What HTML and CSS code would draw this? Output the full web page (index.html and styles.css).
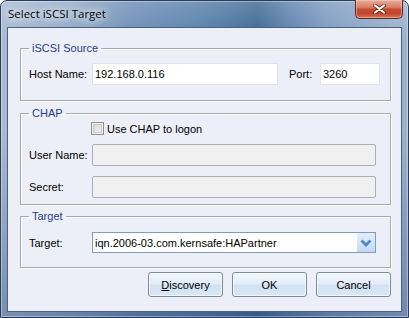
FILE: index.html
```html
<!DOCTYPE html>
<html>
<head>
<meta charset="utf-8">
<title>Select iSCSI Target</title>
<link rel="stylesheet" href="styles.css">
</head>
<body>
<div class="window">
  <div class="titlebar">
    <span class="title">Select iSCSI Target</span>
    <div class="close" aria-label="Close">
      <svg width="13" height="10" viewBox="0 0 13 10">
        <path d="M2 1.5 L11 8.5 M11 1.5 L2 8.5" stroke="#4a1a10" stroke-width="4" stroke-linecap="round" fill="none" opacity="0.7"/>
        <path d="M2 1.5 L11 8.5 M11 1.5 L2 8.5" stroke="#ffffff" stroke-width="2.2" stroke-linecap="round" fill="none"/>
      </svg>
    </div>
  </div>
  <div class="client">
    <fieldset class="group g-source">
      <legend>iSCSI Source</legend>
      <div class="row">
        <span class="lbl">Host Name:</span>
        <div class="field host">192.168.0.116</div>
        <span class="lbl port-lbl">Port:</span>
        <div class="field port">3260</div>
      </div>
    </fieldset>
    <fieldset class="group g-chap">
      <legend>CHAP</legend>
      <div class="check-row">
        <span class="checkbox"></span>
        <span class="check-label">Use CHAP to logon</span>
      </div>
      <div class="row row-user">
        <span class="lbl">User Name:</span>
        <div class="field disabled wide"></div>
      </div>
      <div class="row row-secret">
        <span class="lbl">Secret:</span>
        <div class="field disabled wide"></div>
      </div>
    </fieldset>
    <fieldset class="group g-target">
      <legend>Target</legend>
      <div class="row">
        <span class="lbl">Target:</span>
        <div class="combo">
          <span class="combo-text">iqn.2006-03.com.kernsafe:HAPartner</span>
          <span class="combo-btn">
            <svg width="12" height="8" viewBox="0 0 12 8">
              <path d="M1.5 1.5 L6 6 L10.5 1.5" stroke="#4f86cc" stroke-width="2.8" fill="none" stroke-linejoin="miter"/>
            </svg>
          </span>
        </div>
      </div>
    </fieldset>
    <div class="buttons">
      <div class="btn"><span class="ul">D</span>iscovery</div>
      <div class="btn">OK</div>
      <div class="btn">Cancel</div>
    </div>
  </div>
</div>
</body>
</html>
```

FILE: styles.css
```css
html, body {
  margin: 0;
  padding: 0;
}
body {
  width: 409px;
  height: 318px;
  overflow: hidden;
  background: #ffffff;
  font-family: "Liberation Sans", Arial, sans-serif;
  font-size: 11px;
  color: #000;
}
.window {
  box-sizing: border-box;
  width: 409px;
  height: 318px;
  border: 1px solid #2b3e58;
  border-radius: 7px 7px 0 0;
  display: flex;
  flex-direction: column;
  background:
    linear-gradient(180deg, rgba(255,255,255,0.18) 0%, rgba(255,255,255,0) 12%, rgba(30,60,110,0.0) 40%, rgba(30,60,110,0.35) 100%),
    linear-gradient(90deg, #a9bcd3 0%, #90a9c8 18%, #6d8eb6 32%, #5880ab 48%, #4a729f 57%, #3f6894 63%, #5b80ab 70%, #7d9bbf 80%, #8ea8c8 90%, #9db4cf 100%);
  box-shadow: inset 0 0 0 1px rgba(255,255,255,0.35);
}
.titlebar {
  height: 26px;
  display: flex;
  align-items: flex-start;
  padding-left: 7px;
  flex: none;
}
.title {
  font-family: "Open Sans", "Noto Sans", sans-serif;
  font-size: 11.5px;
  line-height: 16px;
  margin-top: 5px;
  color: #000;
  text-shadow: 0 0 6px rgba(255,255,255,0.95), 0 0 10px rgba(255,255,255,0.8), 0 0 14px rgba(255,255,255,0.6);
}
.close {
  margin-left: auto;
  margin-right: 5px;
  margin-top: -1px;
  width: 48px;
  height: 19px;
  box-sizing: border-box;
  border: 1px solid #5a2a22;
  border-top: none;
  border-radius: 0 0 5px 5px;
  background: linear-gradient(180deg, #e9ab98 0%, #d98068 40%, #c54a31 52%, #c2462e 75%, #d7745a 100%);
  box-shadow: inset 0 0 0 1px rgba(255,220,210,0.45);
  display: flex;
  align-items: center;
  justify-content: center;
}
.client {
  flex: 1;
  margin: 0 6px 5px 6px;
  border: 1px solid #48627f;
  background: #eceff7;
  padding: 14px 10px 0 12px;
  box-sizing: border-box;
  display: flex;
  flex-direction: column;
}
.group {
  margin: 0;
  padding: 0;
  min-width: 0;
  border: 1px solid #a7a9ad;
  box-shadow: 1px 1px 0 #ffffff, inset 1px 1px 0 #ffffff;
}
.group legend {
  margin-left: 8px;
  padding: 0 3px;
  font-size: 11px;
  line-height: 13px;
  color: #1f3a8f;
}
.g-source {
  padding-top: 8px;
  padding-bottom: 15px;
}
.g-chap {
  margin-top: 6px;
  padding-top: 2px;
  padding-bottom: 6px;
}
.g-target {
  margin-top: 5px;
  padding-top: 9px;
  padding-bottom: 14px;
}
.row {
  display: flex;
  align-items: center;
  padding-left: 8px;
}
.lbl {
  width: 63px;
  flex: none;
  white-space: nowrap;
}
.port-lbl {
  width: 31px;
  margin-left: 11px;
}
.field {
  box-sizing: border-box;
  height: 22px;
  border: 1px solid #dfe3ea;
  background: #ffffff;
  padding-left: 2px;
  line-height: 20px;
  font-size: 11px;
  white-space: nowrap;
}
.host {
  width: 186px;
}
.port {
  width: 60px;
}
.wide {
  width: 284px;
}
.disabled {
  background: #f0f0f0;
  border-color: #aeb0b3;
  border-radius: 2px;
}
.check-row {
  display: flex;
  align-items: center;
  height: 13px;
  padding-left: 70px;
}
.checkbox {
  box-sizing: border-box;
  width: 13px;
  height: 13px;
  border: 1px solid #8e8f8f;
  background: linear-gradient(135deg, #cbcbcb 0%, #e4e4e4 50%, #f6f6f6 100%);
  box-shadow: inset 0 0 0 1px #f3f3f3, inset 0 0 0 2px #c9c9c9;
}
.check-label {
  margin-left: 3px;
  white-space: nowrap;
}
.row-user {
  margin-top: 9px;
}
.row-secret {
  margin-top: 10px;
}
.combo {
  box-sizing: border-box;
  width: 284px;
  height: 21px;
  border: 1px solid #7f9db9;
  background: #ffffff;
  display: flex;
  align-items: center;
}
.combo-text {
  padding-left: 2px;
  white-space: nowrap;
  flex: 1;
}
.combo-btn {
  width: 18px;
  height: 19px;
  flex: none;
  background: linear-gradient(180deg, #e3eefb 0%, #d4e5f8 50%, #c2d8f1 100%);
  display: flex;
  align-items: center;
  justify-content: center;
}
.buttons {
  display: flex;
  justify-content: flex-end;
  gap: 9px;
  margin-top: 4px;
}
.btn {
  box-sizing: border-box;
  width: 75px;
  height: 25px;
  border: 1px solid #7b8a9c;
  border-radius: 3px;
  background: linear-gradient(180deg, #f0f5fb 0%, #e3edf8 48%, #d2e2f3 52%, #d9e7f5 100%);
  box-shadow: inset 0 0 0 1px rgba(255,255,255,0.65);
  display: flex;
  align-items: center;
  justify-content: center;
  font-size: 11px;
}
.ul {
  text-decoration: underline;
}
```
